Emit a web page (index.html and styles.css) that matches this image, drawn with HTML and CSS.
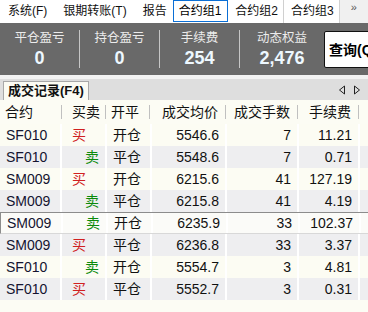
FILE: index.html
```html
<!DOCTYPE html>
<html lang="zh-CN">
<head>
    <meta charset="UTF-8">
    <title>成交记录</title>
    <link rel="stylesheet" href="styles.css">
</head>
<body>
    <div class="menubar">
        <span class="menu">系统(F)</span>
        <span class="menu">银期转账(T)</span>
        <span class="menu">报告</span>
        <span class="group active">合约组1</span>
        <span class="group">合约组2</span>
        <span class="group">合约组3</span>
        <span class="more">&raquo;</span>
    </div>

    <div class="summary">
        <div class="stat"><span class="label">平仓盈亏</span><span class="value">0</span></div>
        <div class="stat"><span class="label">持仓盈亏</span><span class="value">0</span></div>
        <div class="stat"><span class="label">手续费</span><span class="value">254</span></div>
        <div class="stat last"><span class="label">动态权益</span><span class="value">2,476</span></div>
        <button class="query">查询(Q)</button>
    </div>

    <div class="strip"></div>

    <div class="tabbar">
        <span class="tab">成交记录(F4)</span>
        <span class="arrows">
            <svg width="8" height="10" viewBox="0 0 8 10"><path d="M6.5 1 L1.5 5 L6.5 9 Z" fill="none" stroke="#222" stroke-width="1"/></svg>
            <svg width="8" height="10" viewBox="0 0 8 10"><path d="M1.5 1 L6.5 5 L1.5 9 Z" fill="none" stroke="#222" stroke-width="1"/></svg>
        </span>
    </div>

    <div class="grid">
        <div class="row head">
            <div class="c">合约</div>
            <div class="c side">买卖</div>
            <div class="c">开平</div>
            <div class="c num">成交均价</div>
            <div class="c num">成交手数</div>
            <div class="c num">手续费</div>
            <div class="c"></div>
        </div>
        <div id="rows"></div>
    </div>

    <script>
        const trades = [
            ['SF010', 1, '开仓', '5546.6', 7, '11.21'],
            ['SF010', 0, '平仓', '5548.6', 7, '0.71'],
            ['SM009', 1, '开仓', '6215.6', 41, '127.19'],
            ['SM009', 0, '平仓', '6215.8', 41, '4.19'],
            ['SM009', 0, '开仓', '6235.9', 33, '102.37'],
            ['SM009', 1, '平仓', '6236.8', 33, '3.37'],
            ['SF010', 0, '开仓', '5554.7', 3, '4.81'],
            ['SF010', 1, '平仓', '5552.7', 3, '0.31']
        ];
        let html = '';
        trades.forEach((t, i) => {
            let cls = i % 2 ? 'row even' : 'row odd';
            if (i === 4) cls += ' selected';
            const side = t[1] ? '<div class="c side buy">买</div>' : '<div class="c side sell">卖</div>';
            html += `<div class="${cls}">
                <div class="c code">${t[0]}</div>
                ${side}
                <div class="c">${t[2]}</div>
                <div class="c num">${t[3]}</div>
                <div class="c num">${t[4]}</div>
                <div class="c num">${t[5]}</div>
                <div class="c"></div>
            </div>`;
        });
        document.getElementById('rows').innerHTML = html;
    </script>
</body>
</html>
```

FILE: styles.css
```css
body {
    margin: 0;
    width: 368px;
    height: 312px;
    overflow: hidden;
    background-color: #fcfcf4;
    font-family: "Liberation Sans", "Noto Sans CJK SC", sans-serif;
    color: #111;
}
.menubar {
    display: flex;
    align-items: stretch;
    height: 23px;
    background-color: #fff;
    font-size: 12px;
    line-height: 23px;
}
.menu {
    padding: 0 8px;
    flex-shrink: 0;
}
.group {
    flex-shrink: 0;
    padding: 0 5px 0 7px;
    border-right: 1px solid #d0d0d0;
}
.group.active {
    margin-left: -2px;
    padding: 0 6px 0 5px;
    border: 1px solid #0a6fd6;
    line-height: 20px;
    height: 20px;
    color: #000;
}
.more {
    flex: 1;
    background-color: #f0f0f0;
    color: #555;
    font-size: 11px;
    line-height: 14px;
    text-align: center;
}
.summary {
    display: flex;
    align-items: center;
    height: 52px;
    background-color: #696969;
}
.stat {
    flex-shrink: 0;
    width: 79px;
    height: 38px;
    display: flex;
    flex-direction: column;
    align-items: center;
    border-right: 1px solid #c6c6c6;
}
.stat.last {
    border-right: none;
    width: 84px;
}
.label {
    font-size: 12.5px;
    line-height: 17px;
    color: #ececec;
}
.value {
    font-size: 18px;
    line-height: 22px;
    font-weight: bold;
    color: #eef8ff;
}
.query {
    flex-shrink: 0;
    width: 62px;
    height: 37px;
    padding: 0 0 0 4px;
    text-align: left;
    background-color: #fff;
    border: 1px solid #111;
    border-radius: 2px;
    font-family: "Liberation Sans", "Noto Sans CJK SC", sans-serif;
    font-size: 14px;
    font-weight: bold;
    color: #000;
    white-space: nowrap;
}
.strip {
    height: 4px;
    background-color: #f2f2f2;
}
.tabbar {
    display: flex;
    align-items: flex-end;
    justify-content: space-between;
    height: 21px;
    background-color: #dedede;
    padding-left: 3px;
}
.tab {
    height: 18px;
    line-height: 18px;
    padding: 0 4px;
    background-color: #fbfbf3;
    border: 1px solid #a8a8a8;
    border-bottom: none;
    font-size: 13px;
    font-weight: bold;
}
.arrows {
    display: flex;
    gap: 7px;
    align-self: center;
    padding-right: 7px;
}
.grid {
    background-color: #fcfcf4;
}
.row {
    display: grid;
    grid-template-columns: 60px 43px 43px 73px 70px 59px 1fr;
    column-gap: 2px;
    height: 22px;
    font-size: 14px;
    line-height: 22px;
    background-color: #fff;
}
.row.odd .c {
    background-color: #fcfcf3;
}
.row.even .c {
    background-color: #eeeef0;
}
.row.selected {
    box-sizing: border-box;
    border-top: 1px solid #8c8c8c;
    border-left: 1px solid #8c8c8c;
    border-bottom: 1px solid #d8d8d8;
    line-height: 20px;
}
.row.selected .c {
    background-color: #fbfbf8;
}
.c {
    padding: 0 6px;
    white-space: nowrap;
    overflow: hidden;
}
.code {
    color: #141430;
}
.num {
    text-align: right;
}
.buy {
    color: #d02020;
    padding-left: 10px;
}
.sell {
    color: #0a8a0a;
    text-align: right;
}
.row.head {
    grid-template-columns: 62px 44px 44px 76px 72px 61px 1fr;
    height: 24px;
    line-height: 24px;
    column-gap: 0;
    background-color: #fcfcf4;
}
.row.head .c {
    background-color: #fcfcf4;
    background-image: linear-gradient(#c0c0c0, #c0c0c0);
    background-size: 1px 14px;
    background-position: right 5px;
    background-repeat: no-repeat;
    padding-right: 8px;
}
.row.head .c:nth-child(1),
.row.head .c:nth-child(3) {
    padding-left: 5px;
}
.row.head .side {
    padding-left: 10px;
}
.row.head .c:last-child {
    background-image: none;
}
```
